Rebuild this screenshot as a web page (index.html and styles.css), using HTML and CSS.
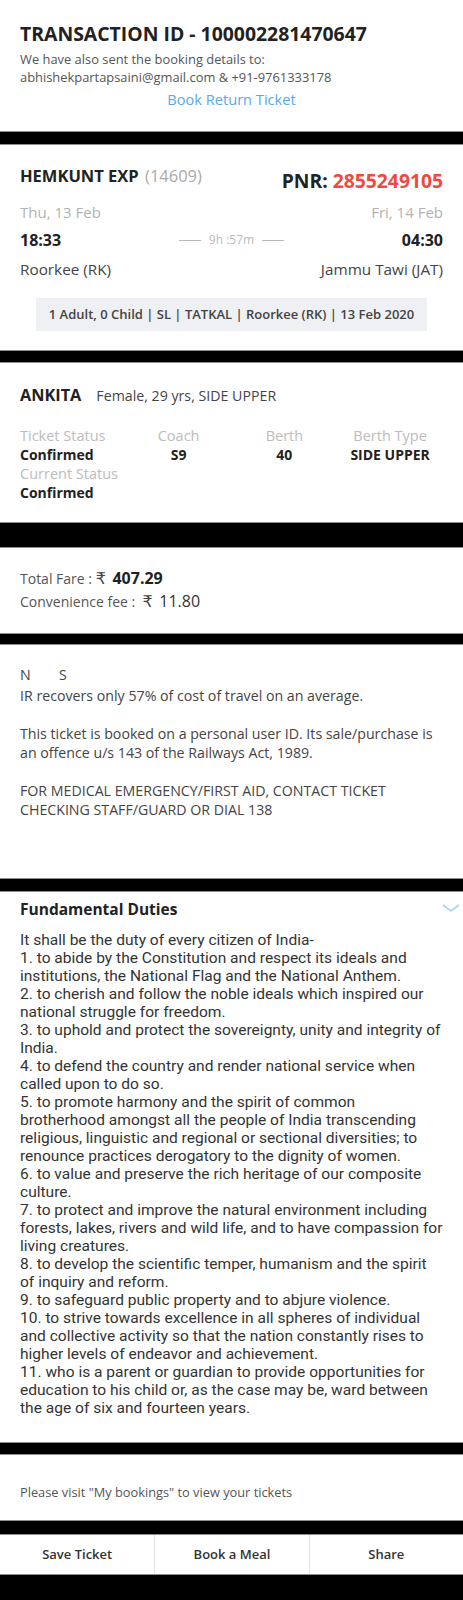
FILE: index.html
```html
<!DOCTYPE html>
<html>
<head>
<meta charset="utf-8">
<link rel="stylesheet" href="styles.css">
</head>
<body>
<section class="card head">
  <h1 class="txn">TRANSACTION ID - 100002281470647</h1>
  <p class="sent">We have also sent the booking details to:<br>abhishekpartapsaini@gmail.com &amp; +91-9761333178</p>
  <div class="ret">Book Return Ticket</div>
</section>

<section class="card train gap14">
  <div class="trow">
    <div class="tname">HEMKUNT EXP <span class="tno">(14609)</span></div>
    <div class="pnr">PNR: <span class="pnrno">2855249105</span></div>
  </div>
  <div class="jrow dates">
    <span>Thu, 13 Feb</span>
    <span></span>
    <span class="r">Fri, 14 Feb</span>
  </div>
  <div class="jrow times">
    <span>18:33</span>
    <span class="dur"><i class="dash"></i>9h :57m<i class="dash"></i></span>
    <span class="r">04:30</span>
  </div>
  <div class="jrow stations">
    <span>Roorkee (RK)</span>
    <span></span>
    <span class="r">Jammu Tawi (JAT)</span>
  </div>
  <div class="summary">1 Adult, 0 Child | SL | TATKAL | Roorkee (RK) | 13 Feb 2020</div>
</section>

<section class="card pax gap13">
  <div class="pname"><b>ANKITA</b><span class="pinfo">Female, 29 yrs, SIDE UPPER</span></div>
  <div class="pgrid">
    <span class="lbl">Ticket Status</span>
    <span class="lbl c">Coach</span>
    <span class="lbl c">Berth</span>
    <span class="lbl c">Berth Type</span>
    <span class="val">Confirmed</span>
    <span class="val c">S9</span>
    <span class="val c">40</span>
    <span class="val c">SIDE UPPER</span>
    <span class="lbl full">Current Status</span>
    <span class="val full">Confirmed</span>
  </div>
</section>

<section class="card fare gap26">
  <div class="fline">Total Fare : <span class="rupee">₹</span> <b class="amt">407.29</b></div>
  <div class="fline">Convenience fee : &nbsp;<span class="rupee">₹</span> <span class="amt">11.80</span></div>
</section>

<section class="card notes gap12">
  <div class="ns"><span class="n">N</span><span>S</span></div>
  <p>IR recovers only 57% of cost of travel on an average.</p>
  <p>This ticket is booked on a personal user ID. Its sale/purchase is an offence u/s 143 of the Railways Act, 1989.</p>
  <p>FOR MEDICAL EMERGENCY/FIRST AID, CONTACT TICKET CHECKING STAFF/GUARD OR DIAL 138</p>
</section>

<section class="card duties gap14">
  <div class="dhead">
    <span class="dtitle">Fundamental Duties</span>
    <svg class="chev" width="18" height="8" viewBox="0 0 18 8"><polyline points="1,1 9,7 17,1" fill="none" stroke="#a9d2f3" stroke-width="1.6"/></svg>
  </div>
  <div class="dbody">
    <div>It shall be the duty of every citizen of India-</div>
    <div>1. to abide by the Constitution and respect its ideals and institutions, the National Flag and the National Anthem.</div>
    <div>2. to cherish and follow the noble ideals which inspired our national struggle for freedom.</div>
    <div>3. to uphold and protect the sovereignty, unity and integrity of India.</div>
    <div>4. to defend the country and render national service when called upon to do so.</div>
    <div>5. to promote harmony and the spirit of common<br>brotherhood amongst all the people of India transcending religious, linguistic and regional or sectional diversities; to renounce practices derogatory to the dignity of women.</div>
    <div>6. to value and preserve the rich heritage of our composite culture.</div>
    <div>7. to protect and improve the natural environment including forests, lakes, rivers and wild life, and to have compassion for living creatures.</div>
    <div>8. to develop the scientific temper, humanism and the spirit of inquiry and reform.</div>
    <div>9. to safeguard public property and to abjure violence.</div>
    <div>10. to strive towards excellence in all spheres of individual and collective activity so that the nation constantly rises to higher levels of endeavor and achievement.</div>
    <div>11. who is a parent or guardian to provide opportunities for education to his child or, as the case may be, ward between the age of six and fourteen years.</div>
  </div>
</section>

<section class="card visit gap13">
  Please visit "My bookings" to view your tickets
</section>

<section class="card actions gap15">
  <div class="act">Save Ticket</div>
  <div class="act">Book a Meal</div>
  <div class="act">Share</div>
</section>
</body>
</html>
```

FILE: styles.css
```css
html, body {
  margin: 0;
  padding: 0;
  background: #000;
}
body {
  width: 463px;
  min-height: 1600px;
  font-family: "Open Sans", "Liberation Sans", sans-serif;
  color: #444;
}
.card {
  background: #fff;
  box-shadow: 0 0 0 1px #8e8e8e;
}
.gap12 { margin-top: 12px; }
.gap13 { margin-top: 13px; }
.gap14 { margin-top: 14px; }
.gap15 { margin-top: 15px; }
.gap26 { margin-top: 26px; }

/* header */
.head {
  height: 131px;
  box-sizing: border-box;
  padding: 22px 20px 0;
}
.txn {
  margin: 0;
  font-size: 19.4px;
  line-height: 24px;
  font-weight: 700;
  color: #222;
}
.sent {
  margin: 4px 0 0;
  font-size: 12.9px;
  line-height: 18px;
  color: #555;
}
.ret {
  margin-top: 3px;
  text-align: center;
  font-size: 14.6px;
  line-height: 20px;
  color: #5aa8ec;
}

/* train */
.train {
  height: 205px;
  box-sizing: border-box;
  padding: 20px 20px 0;
}
.trow {
  display: flex;
  justify-content: space-between;
  align-items: flex-start;
}
.tname {
  font-size: 16.5px;
  line-height: 22px;
  font-weight: 700;
  color: #222;
}
.tno {
  font-weight: 400;
  color: #aaa;
  margin-left: 2px;
}
.pnr {
  margin-top: 4px;
  font-size: 19.3px;
  line-height: 24px;
  font-weight: 700;
  color: #222;
}
.pnrno { color: #ee4a42; }
.jrow {
  display: grid;
  grid-template-columns: 1fr auto 1fr;
  align-items: center;
}
.jrow .r { text-align: right; }
.dates {
  margin-top: 9px;
  font-size: 15px;
  line-height: 20px;
  color: #b3b3b3;
}
.times {
  margin-top: 7px;
  font-size: 16px;
  line-height: 22px;
  font-weight: 700;
  color: #222;
}
.dur {
  display: flex;
  align-items: center;
  gap: 8px;
  font-size: 12px;
  font-weight: 400;
  color: #bbb;
}
.dash {
  display: block;
  width: 22px;
  height: 1px;
  background: #bbb;
}
.stations {
  margin-top: 8px;
  font-size: 15.3px;
  line-height: 20px;
  color: #444;
}
.summary {
  width: fit-content;
  margin: 19px auto 0;
  padding: 0 13px;
  height: 33px;
  line-height: 33px;
  background: #eef0f3;
  font-size: 13px;
  font-weight: 600;
  color: #444;
}

/* passenger */
.pax {
  height: 159px;
  box-sizing: border-box;
  padding: 21px 20px 0;
}
.pname {
  font-size: 16.3px;
  line-height: 22px;
  color: #222;
}
.pname b { font-weight: 700; }
.pinfo {
  margin-left: 15px;
  font-size: 14.2px;
  color: #444;
}
.pgrid {
  margin-top: 19px;
  display: grid;
  grid-template-columns: repeat(4, 1fr);
  font-size: 14px;
  line-height: 19px;
}
.lbl { color: #bcbcbc; font-size: 14.5px; }
.val { color: #222; font-weight: 700; }
.pgrid .c { text-align: center; }
.pgrid .full { grid-column: 1 / -1; }

/* fare */
.fare {
  height: 85px;
  box-sizing: border-box;
  padding: 19px 20px 0;
}
.fline {
  font-size: 14px;
  line-height: 23px;
  color: #555;
}
.rupee {
  font-family: "DejaVu Sans", "Noto Sans", sans-serif;
  font-size: 16px;
  line-height: 1;
  color: #444;
}
.amt {
  font-size: 16px;
  margin-left: 3px;
  color: #333;
}
b.amt { font-weight: 700; color: #222; }

/* notes */
.notes {
  height: 233px;
  box-sizing: border-box;
  padding: 20px 20px 0;
  font-size: 14.2px;
  line-height: 19px;
  color: #444;
}
.ns {
  margin-bottom: 2px;
  display: flex;
}
.ns .n { width: 39px; }
.notes p { margin: 0 0 19px; }

/* duties */
.duties {
  height: 550px;
  box-sizing: border-box;
  padding-top: 7px;
}
.dhead {
  display: flex;
  justify-content: space-between;
  align-items: center;
  padding: 0 3px 0 20px;
  height: 20px;
}
.dtitle {
  font-size: 15.5px;
  line-height: 20px;
  font-weight: 700;
  color: #222;
}
.chev { display: block; margin-top: -2px; }
.dbody {
  margin-top: 12px;
  padding: 0 18.8px 0 20px;
  font-family: Roboto, "Noto Sans", sans-serif;
  font-size: 15.55px;
  line-height: 18px;
  color: #333;
}

/* visit */
.visit {
  height: 65px;
  box-sizing: border-box;
  padding: 28px 20px 0;
  font-size: 12.8px;
  line-height: 18px;
  color: #555;
}

/* actions */
.actions {
  display: grid;
  grid-template-columns: repeat(3, 1fr);
  height: 39px;
}
.act {
  text-align: center;
  font-size: 13px;
  line-height: 39px;
  font-weight: 600;
  color: #333;
}
.act + .act { border-left: 1px solid #e2e2e2; }
```
